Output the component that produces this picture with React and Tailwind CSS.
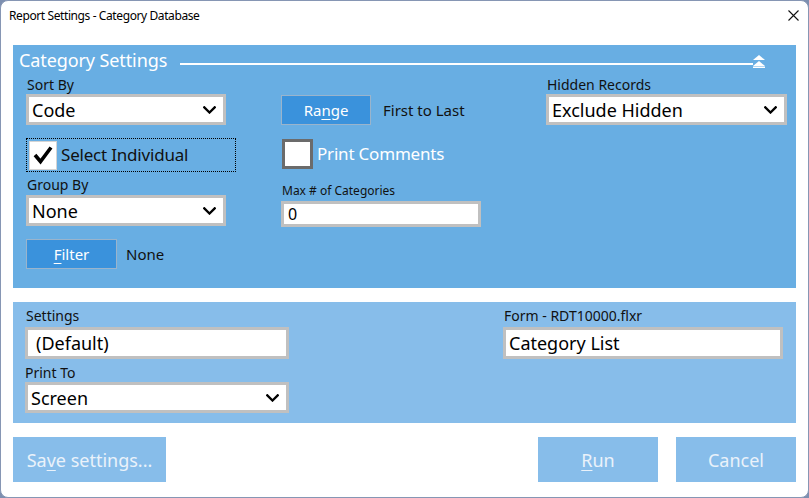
import React from "react";

function Chevron() {
  return (
    <svg width="13" height="8" viewBox="0 0 13 8" className="shrink-0">
      <polyline points="1.3,1.3 6.5,6.5 11.7,1.3" fill="none" stroke="#000" strokeWidth="2.3" strokeLinecap="square" />
    </svg>
  );
}

function SelectBox({ text, className }) {
  return (
    <div className={`flex items-center justify-between border-[3px] border-[#c0c0c0] bg-white pl-[3px] pr-[7px] ${className}`}>
      <span className="text-[18px] leading-[22px] text-black">{text}</span>
      <Chevron />
    </div>
  );
}

export default function App() {
  return (
    <div className="w-[809px] h-[498px] bg-[#7d8fb0] font-['Noto_Sans',sans-serif] text-[#111]">
      <div className="w-[809px] h-[498px] border border-[#8696b4] rounded-[8px] bg-white flex flex-col overflow-hidden">
        {/* Title bar */}
        <div className="h-[32px] flex items-start justify-between pl-[8px] pr-[9px]">
          <span className="mt-[7px] text-[12px] leading-[16px] tracking-[-0.4px] text-black">Report Settings - Category Database</span>
          <svg width="11" height="11" viewBox="0 0 11 11" className="mt-[9px]">
            <path d="M0.5 0.5 L10.5 10.5 M10.5 0.5 L0.5 10.5" stroke="#111" strokeWidth="1.1" />
          </svg>
        </div>

        <div className="px-[12px] flex flex-col">
          {/* Top panel */}
          <div className="mt-[12px] h-[243px] bg-[#68aee3] pt-[3px] flex flex-col">
            <div className="flex items-start h-[24px] pl-[6px] pr-[31px]">
              <span className="text-[18px] leading-[24px] tracking-[-0.1px] text-white">Category Settings</span>
              <div className="flex-1 h-[2px] bg-white ml-[13px] mt-[15px]" />
              <svg width="12" height="13" viewBox="0 0 12 13" className="mt-[7px] shrink-0">
                <polygon points="0,5 6,0 12,5" fill="#fff" />
                <polygon points="0,11 6,6 12,11" fill="#fff" />
                <rect x="0" y="11.5" width="12" height="1.5" fill="#fff" />
              </svg>
            </div>

            <div className="flex mt-[4px] pl-[13px]">
              {/* Column 1 */}
              <div className="w-[255px] flex flex-col items-start">
                <span className="text-[14px] leading-[18px] pl-[1px]">Sort By</span>
                <SelectBox text="Code" className="w-[200px] h-[31px]" />
                <div className="mt-[13px] w-[210px] h-[34px] border border-dotted border-black flex items-center pl-[2px]">
                  <div className="w-[28px] h-[29px] bg-white border border-[#d4d4d4] flex items-center justify-center">
                    <svg width="22" height="22" viewBox="0 0 22 22">
                      <polyline points="3,11 8.5,17.5 19,3.5" fill="none" stroke="#000" strokeWidth="3.6" />
                    </svg>
                  </div>
                  <span className="ml-[4px] text-[17px] leading-[22px] tracking-[-0.2px]">Select Individual</span>
                </div>
                <span className="mt-[4px] text-[14px] leading-[18px] pl-[1px]">Group By</span>
                <SelectBox text="None" className="mt-[1px] w-[200px] h-[31px]" />
                <div className="mt-[13px] flex items-center">
                  <div className="w-[91px] h-[30px] bg-[#3a92dc] border border-[#9ab4cc] flex items-center justify-center text-white text-[15px] leading-[20px]">
                    <span><span className="underline underline-offset-[3px]">F</span>ilter</span>
                  </div>
                  <span className="ml-[9px] text-[15px] leading-[20px]">None</span>
                </div>
              </div>

              {/* Column 2 */}
              <div className="w-[265px] flex flex-col items-start">
                <div className="mt-[19px] flex items-center">
                  <div className="w-[90px] h-[30px] bg-[#3a92dc] border border-[#9ab4cc] flex items-center justify-center text-white text-[15px] leading-[20px]">
                    <span>Ra<span className="underline underline-offset-[3px]">n</span>ge</span>
                  </div>
                  <span className="ml-[12px] text-[15px] leading-[20px]">First to Last</span>
                </div>
                <div className="mt-[14px] flex items-center">
                  <div className="ml-[1px] w-[31px] h-[30px] bg-white border-[3px] border-[#6b6b6b]" />
                  <span className="ml-[4px] text-[17px] leading-[22px] tracking-[-0.2px] text-white">Print Comments</span>
                </div>
                <span className="mt-[14px] text-[12px] leading-[16px] pl-[1px]">Max # of Categories</span>
                <div className="mt-[2px] w-[200px] h-[26px] border-[3px] border-[#c0c0c0] bg-white flex items-center pl-[4px] text-[16px] leading-[20px] text-black">0</div>
              </div>

              {/* Column 3 */}
              <div className="w-[241px] flex flex-col items-start">
                <span className="text-[14px] leading-[18px] pl-[1px]">Hidden Records</span>
                <SelectBox text="Exclude Hidden" className="w-[241px] h-[31px]" />
              </div>
            </div>
          </div>

          {/* Bottom panel */}
          <div className="mt-[14px] h-[121px] bg-[#87bdea] flex pl-[12px] pt-[5px]">
            <div className="w-[264px] flex flex-col">
              <span className="text-[14px] leading-[18px] pl-[1px]">Settings</span>
              <div className="mt-[2px] h-[32px] border-[3px] border-[#c0c0c0] bg-white flex items-center pl-[8px] text-[18px] leading-[22px] text-black">(Default)</div>
              <span className="mt-[5px] text-[14px] leading-[18px]">Print To</span>
              <SelectBox text="Screen" className="h-[31px]" />
            </div>
            <div className="ml-[214px] w-[280px] flex flex-col">
              <span className="text-[14px] leading-[18px] pl-[1px]">Form - RDT10000.flxr</span>
              <div className="mt-[2px] h-[32px] border-[3px] border-[#c0c0c0] bg-white flex items-center pl-[3px] text-[18px] leading-[22px] text-black">Category List</div>
            </div>
          </div>

          {/* Buttons */}
          <div className="mt-[14px] flex h-[45px] text-[18px] leading-[24px] text-[#eaf2fa]">
            <div className="w-[153px] bg-[#87bdea] flex items-center justify-center">
              <span>Sa<span className="underline underline-offset-[3px]">v</span>e settings...</span>
            </div>
            <div className="flex-1" />
            <div className="w-[120px] bg-[#87bdea] flex items-center justify-center">
              <span><span className="underline underline-offset-[3px]">R</span>un</span>
            </div>
            <div className="ml-[18px] w-[120px] bg-[#87bdea] flex items-center justify-center">
              <span>Cancel</span>
            </div>
          </div>
        </div>
      </div>
    </div>
  );
}
